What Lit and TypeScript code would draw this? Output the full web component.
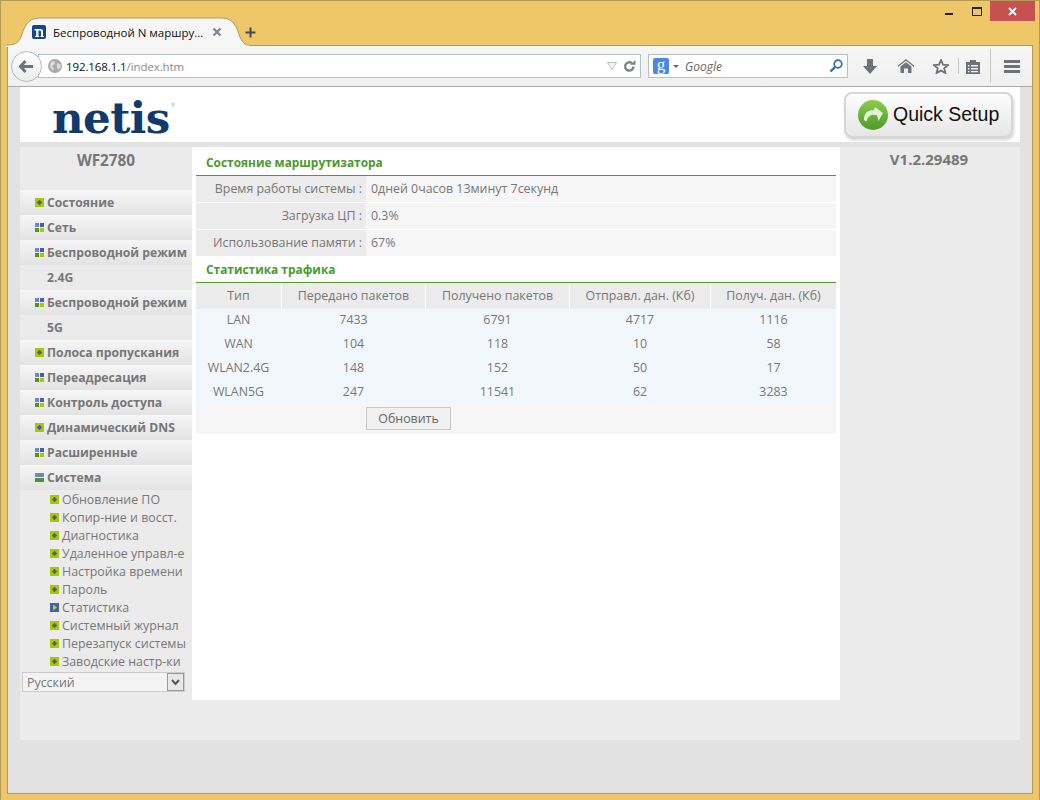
import { LitElement, html, css, svg } from "lit";
import { customElement } from "lit/decorators.js";

const menu: { t: string; icon: string; flat?: boolean }[] = [
  { t: "Состояние", icon: "leaf" },
  { t: "Сеть", icon: "folder" },
  { t: "Беспроводной режим", icon: "folder" },
  { t: "2.4G", icon: "", flat: true },
  { t: "Беспроводной режим", icon: "folder" },
  { t: "5G", icon: "", flat: true },
  { t: "Полоса пропускания", icon: "leaf" },
  { t: "Переадресация", icon: "folder" },
  { t: "Контроль доступа", icon: "folder" },
  { t: "Динамический DNS", icon: "leaf" },
  { t: "Расширенные", icon: "folder" },
  { t: "Система", icon: "minus" },
];
const sub = ["Обновление ПО", "Копир-ние и восст.", "Диагностика", "Удаленное управл-е", "Настройка времени", "Пароль", "Статистика", "Системный журнал", "Перезапуск системы", "Заводские настр-ки"];
const status = [["Время работы системы :", "0дней 0часов 13минут 7секунд"], ["Загрузка ЦП :", "0.3%"], ["Использование памяти :", "67%"]];
const heads = ["Тип", "Передано пакетов", "Получено пакетов", "Отправл. дан. (Кб)", "Получ. дан. (Кб)"];
const rows = [["LAN", "7433", "6791", "4717", "1116"], ["WAN", "104", "118", "10", "58"], ["WLAN2.4G", "148", "152", "50", "17"], ["WLAN5G", "247", "11541", "62", "3283"]];

const icon = (k: string) => {
  if (k === "folder") return html`<svg class="ic" viewBox="0 0 9 9"><rect width="4" height="4" fill="#6f88c4"/><rect x="5" width="4" height="4" fill="#3f62ad"/><rect y="5" width="4" height="4" fill="#4f9330"/><rect x="5" y="5" width="4" height="4" fill="#a9c800"/></svg>`;
  if (k === "minus") return html`<svg class="ic" viewBox="0 0 9 9"><rect y="0" width="9" height="4" fill="#6f88c4"/><rect y="5" width="9" height="4" fill="#4f9330"/></svg>`;
  if (k === "leaf") return html`<svg class="ic" viewBox="0 0 9 9"><rect width="9" height="9" fill="#a9c800"/><path d="M4.5 1.8 7.2 4.5 4.5 7.2 1.8 4.5Z" fill="#3f62ad"/></svg>`;
  if (k === "active") return html`<svg class="ic" viewBox="0 0 9 9"><rect width="9" height="9" fill="#3f62ad"/><path d="M3 1.5 7 4.5 3 7.5Z" fill="#c8d400"/></svg>`;
  return html`<span class="ic"></span>`;
};

@customElement("app-root")
export class AppRoot extends LitElement {
  static styles = css`
    :host { display: block; width: 1040px; height: 800px; box-sizing: border-box; background: #eec76a; border: 1px solid #b39a55; border-bottom: 0; padding: 0 6px 0 6px; font-family: "Open Sans", sans-serif; font-size: 12.4px; color: #777; overflow: hidden; }
    .win { display: flex; flex-direction: column; height: 793px; box-sizing: border-box; }
    .title { height: 44px; flex: none; display: flex; position: relative; z-index: 2; }
    .tabwrap { position: relative; width: 237px; height: 44px; flex: none; }
    .tabshape { position: absolute; left: -1px; top: 0; }
    .tab { position: absolute; inset: 17px 0 auto 0; display: flex; align-items: center; padding: 0 0 0 25px; gap: 7px; color: #111; font-size: 11.5px; height: 28px; }
    .tab .lbl { width: 152px; white-space: nowrap; }
    .plus { margin: 18px 0 0 0; width: 12px; height: 26px; flex: none; display: flex; justify-content: center; align-items: center; }
    .ctrl { margin-left: auto; display: flex; align-items: flex-start; height: 20px; margin-right: -2px; }
    .ctrl div { display: flex; align-items: center; justify-content: center; }
    .min { width: 27px; height: 20px; }
    .max { width: 27px; height: 20px; }
    .close { width: 45px; height: 20px; background: #c75050; }
    .toolbar { height: 42px; box-sizing: border-box; flex: none; background: linear-gradient(#f6f6f6, #f0f0f0); border: 1px solid #b39a55; border-bottom: 1px solid #a9a9a9; display: flex; align-items: center; padding: 0 0 0 3px; }
    .back { width: 31px; height: 31px; border-radius: 50%; background: linear-gradient(#fff, #ececec); border: 1px solid #b9b9b9; display: flex; align-items: center; justify-content: center; flex: none; z-index: 1; box-sizing: border-box; }
    .url { margin-left: -4px; width: 603px; height: 24px; box-sizing: border-box; border: 1px solid #b5bfca; background: #fff; display: flex; align-items: center; padding-left: 9px; font-size: 11.5px; letter-spacing: -0.1px; color: #111; flex: none; }
    .url .path { color: #8a8a8a; }
    .url .globe { margin-right: 4px; }
    .url .rt { margin-left: auto; display: flex; gap: 6px; align-items: center; padding-right: 4px; }
    .search { margin-left: 7px; width: 200px; height: 24px; box-sizing: border-box; border: 1px solid #b5bfca; background: #fff; display: flex; align-items: center; padding: 0 4px; font-size: 12px; font-style: italic; color: #666; flex: none; }
    .g { width: 16px; height: 16px; border-radius: 2px; background: #4a86e8; color: #fff; font: 17px/13px "Liberation Serif", serif; text-align: center; flex: none; }
    .search .car { width: 0; height: 0; border: 3px solid transparent; border-top: 3px solid #666; border-bottom: 0; margin: 0 6px 0 4px; }
    .search svg { margin-left: auto; }
    .tools { display: flex; align-items: center; flex: 1; height: 100%; }
    .tool { width: 36px; display: flex; justify-content: center; flex: none; }
    .tool.first { margin-left: 4px; }
    .tool.star { width: 34px; }
    .tool.clip { width: 28px; }
    .tool.menu { margin-left: 3px; }
    .sep { width: 1px; height: 16px; background: #c8c8c8; flex: none; }
    .sep.tall { height: 34px; margin-left: 3px; }
    .page { flex: 1; background: #e2e2e2; padding: 0 12px; border-left: 1px solid #b39a55; border-right: 1px solid #b39a55; border-bottom: 1px solid #b39a55; }
    .head { height: 55px; background: #fff; display: flex; align-items: center; justify-content: space-between; padding: 0 7px 0 32px; }
    .logo { color: #0f3a6b; font: bold 43.6px/1 "DejaVu Serif", serif; letter-spacing: -0.6px; display: flex; align-items: flex-start; margin-top: 6px; }
    .logo sup { font: 6px/1 "Liberation Sans", sans-serif; color: #9aa; margin: 6px 0 0 1px; }
    .qs { width: 169px; height: 46px; box-sizing: border-box; border: 2px solid #d6d6d6; border-radius: 8px; background: linear-gradient(#fdfdfd, #e6e6e6); box-shadow: 1px 2px 3px rgba(0,0,0,.18); display: flex; align-items: center; gap: 5px; padding-left: 12px; color: #111; font: 19.5px "Liberation Sans", sans-serif; }
    .main { margin-top: 5px; height: 593px; background: #ebebeb; display: grid; grid-template-columns: 172px 648px 180px; }
    .model { font-weight: 700; font-size: 15.3px; color: #777; text-align: center; height: 43px; padding-top: 2px; box-sizing: border-box; line-height: 22px; }
    .item { height: 25px; box-sizing: border-box; padding: 0 0 1px 15px; display: flex; align-items: center; gap: 3px; font-weight: 700; font-size: 12.2px; background: linear-gradient(#f6f6f6, #e3e3e3); white-space: nowrap; }
    .item.flat { background: #ebebeb; }
    .ic { width: 9px; height: 9px; flex: none; display: block; }
    .subitem { height: 18px; box-sizing: border-box; padding: 0 0 0 30px; display: flex; align-items: center; gap: 3px; white-space: nowrap; }
    .sel { margin: 2px 0 0 2px; width: 163px; height: 20px; box-sizing: border-box; border: 1px solid #ccc; background: #f3f3f3; display: flex; align-items: center; justify-content: space-between; padding-left: 4px; }
    .sel .arrow { width: 17px; height: 18px; box-sizing: border-box; border: 1px solid #999; background: #e8e8e8; display: flex; align-items: center; justify-content: center; }
    .content { background: #fff; height: 553px; padding: 0 4px; box-sizing: border-box; }
    .sect { height: 29px; box-sizing: border-box; border-bottom: 1px solid #4f9a2c; display: flex; align-items: center; padding: 2px 0 0 10px; color: #4a9a2e; font-weight: 700; font-size: 11.9px; }
    .sect.second { height: 26px; padding: 0 0 2px 10px; }
    .st { display: grid; grid-template-columns: 170px 470px; height: 26px; margin-bottom: 1px; line-height: 25px; }
    .st .k { background: #ececec; text-align: right; padding-right: 4px; }
    .st .v { background: #f6f6f6; padding-left: 5px; }
    .tr { display: grid; grid-template-columns: 85px 143px 143px 140px 125px; column-gap: 1px; text-align: center; height: 24px; line-height: 26px; }
    .tr.h > div { background: #ececec; }
    .tr.d { background: #f2f7fb; }
    .foot { height: 31px; background: #f6f6f6; padding: 4px 0 0 170px; box-sizing: border-box; }
    .btn { width: 85px; height: 23px; box-sizing: border-box; border: 1px solid #c8c8c8; background: #f1f1f1; display: flex; align-items: center; justify-content: center; color: #666; }
    .ver { font-weight: 700; font-size: 15px; color: #777; text-align: center; padding: 1px 2px 0 0; line-height: 22px; }
  `;

  private tabPath() {
    return svg`<path d="M0 46 L0 44 C8 44 12 43 15 36 C18 27 21 17 33 17 L216 17 C228 17 231 27 234 36 C237 43 240 44 243 44 L243 46 Z" fill="#f6f6f6"/>
    <path d="M0 44 C8 44 12 43 15 36 C18 27 21 17 33 17 L216 17 C228 17 231 27 234 36 C237 43 240 44 243 44" fill="none" stroke="#b39a55"/>`;
  }

  render() {
    return html`<div class="win">
      <div class="title">
        <div class="tabwrap">
          <svg class="tabshape" width="244" height="47" viewBox="0 0 244 47">${this.tabPath()}</svg>
          <div class="tab">
            <svg width="14" height="14" viewBox="0 0 14 14"><rect width="14" height="14" rx="2" fill="#13478a"/><path d="M2.5 4H8.5C10.5 4 11 5.2 11 6.5V11H12V12H8.5V11H9V7C9 5.8 8.6 5.5 8 5.5H6.5V11H7.2V12H3V11H4.2V5.5H2.5Z" fill="#fff"/></svg>
            <span class="lbl">Беспроводной N маршру...</span>
            <svg width="10" height="10" viewBox="0 0 10 10"><path d="M1.5 1.5 8.5 8.5M8.5 1.5 1.5 8.5" stroke="#7e858c" stroke-width="2.2"/></svg>
          </div>
        </div>
        <div class="plus"><svg width="11" height="11" viewBox="0 0 11 11"><path d="M5.5 0.5V10.5M0.5 5.5H10.5" stroke="#454a50" stroke-width="2"/></svg></div>
        <div class="ctrl">
          <div class="min"><svg width="9" height="10" viewBox="0 0 9 10"><rect y="7" width="8" height="2" fill="#222"/></svg></div>
          <div class="max"><svg width="10" height="9" viewBox="0 0 10 9"><path d="M0.5 1h9v7.5h-9Z" fill="none" stroke="#222"/><rect width="10" height="2" fill="#222"/></svg></div>
          <div class="close"><svg width="9" height="9" viewBox="0 0 9 9"><path d="M1 1 8 8M8 1 1 8" stroke="#fff" stroke-width="1.8"/></svg></div>
        </div>
      </div>
      <div class="toolbar">
        <div class="back"><svg width="15" height="13" viewBox="0 0 15 13"><path d="M6.5 1 1.5 6.5 6.5 12M2 6.5H14" fill="none" stroke="#6f7378" stroke-width="3" stroke-linejoin="round"/></svg></div>
        <div class="url">
          <svg class="globe" width="14" height="14" viewBox="0 0 14 14"><circle cx="7" cy="7" r="7" fill="#a9a9a9"/><path d="M3 3 6 2 7 5 4 7 6 10 5 12 2 8ZM9 4 12 5 13 8 10 11 9 8Z" fill="#dcdcdc"/></svg>
          <span>192.168.1.1</span><span class="path">/index.htm</span>
          <span class="rt">
            <svg width="10" height="8" viewBox="0 0 10 8"><path d="M0.5 0.5H9.5L5 7.5Z" fill="#f2f4f6" stroke="#b7bec6"/></svg>
            <svg width="13" height="13" viewBox="0 0 13 13"><path d="M10.5 6.5A4.2 4.2 0 1 1 9 3.2" fill="none" stroke="#7d8286" stroke-width="2.4"/><path d="M7 4.8H12.5V0Z" fill="#7d8286"/></svg>
          </span>
        </div>
        <div class="search">
          <span class="g">g</span><span class="car"></span><span>Google</span>
          <svg width="14" height="14" viewBox="0 0 14 14"><circle cx="9" cy="5" r="3.8" fill="none" stroke="#2a6fa8" stroke-width="1.7"/><path d="M6 8 1.5 12.5" stroke="#2a6fa8" stroke-width="2.4"/></svg>
        </div>
        <div class="tools">
          <div class="tool first"><svg width="14" height="15" viewBox="0 0 14 15"><path d="M4 0H10V7H14L7 15 0 7H4Z" fill="#6f7378"/></svg></div>
          <div class="tool"><svg width="16" height="14" viewBox="0 0 16 14"><path d="M8 0 16 6.5V8L8 1.8 0 8V6.5Z" fill="#6f7378"/><path d="M8 3.2 13.5 7.5V14H10V9.5H6V14H2.5V7.5Z" fill="#6f7378"/></svg></div>
          <div class="tool star"><svg width="16" height="15" viewBox="0 0 16 15"><path d="M8 1 10 5.6 15 6.1 11.2 9.4 12.4 14 8 11.6 3.6 14 4.8 9.4 1 6.1 6 5.6Z" fill="none" stroke="#6f7378" stroke-width="1.8"/></svg></div>
          <div class="sep"></div>
          <div class="tool clip"><svg width="14" height="15" viewBox="0 0 14 15"><path d="M0 3H4V1H10V3H14V15H0Z" fill="#6f7378"/><path d="M2 6H3.5V7.5H2ZM5 6H12V7.5H5ZM2 9H3.5V10.5H2ZM5 9H12V10.5H5ZM2 12H3.5V13.2H2ZM5 12H12V13.2H5Z" fill="#f2f2f2"/></svg></div>
          <div class="sep tall"></div>
          <div class="tool menu"><svg width="16" height="13" viewBox="0 0 16 13"><path d="M0 1.5H16M0 6.5H16M0 11.5H16" stroke="#6f7378" stroke-width="3"/></svg></div>
        </div>
      </div>
      <div class="page">
        <div class="head">
          <div class="logo">netis<sup>®</sup></div>
          <div class="qs">
            <svg width="30" height="30" viewBox="0 0 30 30"><defs><linearGradient id="q" x1="0" y1="0" x2="0" y2="1"><stop offset="0" stop-color="#8ccb4e"/><stop offset="1" stop-color="#4c9a2a"/></linearGradient></defs><circle cx="15" cy="15" r="15" fill="url(#q)"/><path d="M6 20C6 13 10 9.5 15.5 10.5L17 7 25 13 20.5 21 19 15.5C14 13.5 10 15.5 8.5 21.5Z" fill="#e3f1d4"/></svg>
            <span>Quick Setup</span>
          </div>
        </div>
        <div class="main">
          <div>
            <div class="model">WF2780</div>
            ${menu.map((m) => html`<div class="item ${m.flat ? "flat" : ""}">${icon(m.icon)}<span>${m.t}</span></div>`)}
            ${sub.map((s) => html`<div class="subitem">${icon(s === "Статистика" ? "active" : "leaf")}<span>${s}</span></div>`)}
            <div class="sel"><span>Русский</span><span class="arrow"><svg width="9" height="7" viewBox="0 0 9 7"><path d="M1 1 4.5 5 8 1" fill="none" stroke="#555" stroke-width="2"/></svg></span></div>
          </div>
          <div class="content">
            <div class="sect">Состояние маршрутизатора</div>
            ${status.map(([k, v]) => html`<div class="st"><div class="k">${k}</div><div class="v">${v}</div></div>`)}
            <div class="sect second">Статистика трафика</div>
            <div class="tr h">${heads.map((h) => html`<div>${h}</div>`)}</div>
            ${rows.map((r) => html`<div class="tr d">${r.map((c) => html`<div>${c}</div>`)}</div>`)}
            <div class="foot"><div class="btn">Обновить</div></div>
          </div>
          <div class="ver">V1.2.29489</div>
        </div>
      </div>
    </div>`;
  }
}
